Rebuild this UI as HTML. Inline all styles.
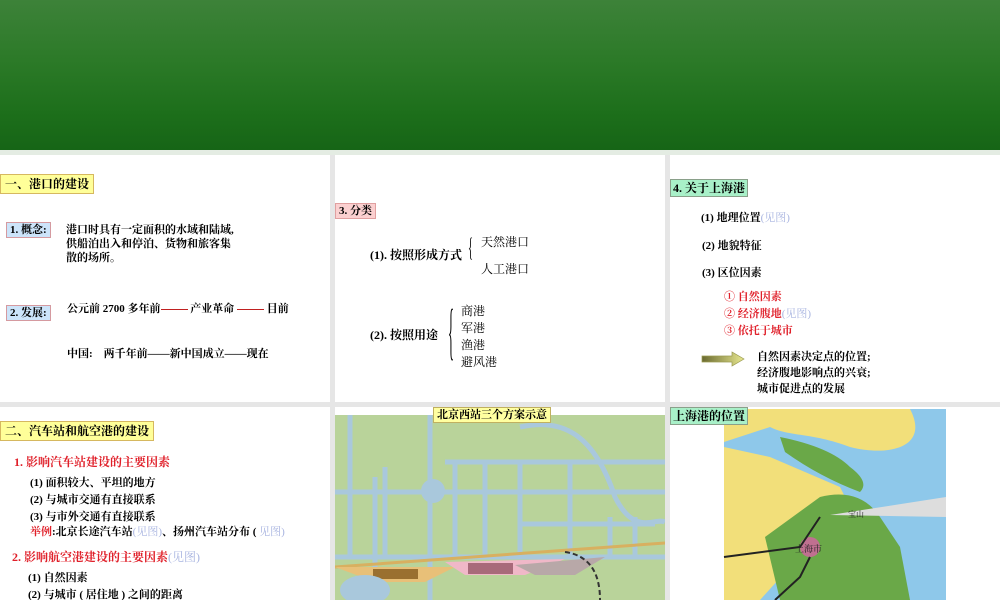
<!DOCTYPE html>
<html><head><meta charset="utf-8"><style>
body{margin:0;width:1000px;height:600px;overflow:hidden;background:#e6e6e6;position:relative;font-family:"Liberation Serif","Noto Serif CJK SC",serif;color:#000}
.hdr{position:absolute;left:0;top:0;width:1000px;height:150px;background:linear-gradient(#3d8239,#2c7a28 40%,#1d6f1b 75%,#166516)}
.strip{position:absolute;left:0;top:150px;width:1000px;height:5px;background:#e4ece3}
.p{position:absolute;background:#fff;overflow:hidden}
.t{position:absolute;white-space:nowrap;font-size:11px;font-weight:bold;line-height:1}
.tag{position:absolute;font-size:12px;font-weight:bold;padding:2px 3px;white-space:nowrap;line-height:14px}
.y{background:#ffff99;border:1px solid #d6b860}
.b{background:#cce4fa;border:1px solid #d59aa0}
.r{color:#e0202a}
.l{color:#a8b4e0;font-weight:normal}
</style></head><body>
<div class="hdr"></div><div class="strip"></div>
<!-- panel 1 -->
<div class="p" style="left:0;top:155px;width:330px;height:247px">
<div class="tag y" style="left:0;top:19px;padding:2px 4px">一、港口的建设</div>
<div class="tag b" style="left:6px;top:67px;font-size:11px;padding:0 3px">1. 概念:</div>
<div class="t" style="left:66px;top:68px;line-height:14px">港口时具有一定面积的水域和陆域,<br>供船泊出入和停泊、货物和旅客集<br>散的场所。</div>
<div class="tag b" style="left:6px;top:150px;font-size:11px;padding:0 3px">2. 发展:</div>
<div class="t" style="left:67px;top:149px">公元前 2700 多年前<span style="display:inline-block;width:27px;border-top:1px solid #c02020;vertical-align:middle"></span> 产业革命 <span style="display:inline-block;width:27px;border-top:1px solid #c02020;vertical-align:middle"></span> 目前</div>
<div class="t" style="left:67px;top:194px">中国:&nbsp;&nbsp;&nbsp; 两千年前——新中国成立——现在</div>
</div>
<!-- panel 2 -->
<div class="p" style="left:335px;top:155px;width:330px;height:247px">
<div class="tag" style="left:0;top:48px;background:#fbd0d0;border:1px solid #e0a0a0;font-size:11px;padding:0 3px">3. 分类</div>
<div class="t" style="left:35px;top:94px;font-size:12px">(1). 按照形成方式</div>
<div class="t" style="left:133px;top:80px;font-size:26px;font-weight:normal;transform:scaleX(.4);transform-origin:left">{</div>
<div class="t" style="left:146px;top:81px;font-size:12px;font-weight:normal">天然港口</div>
<div class="t" style="left:146px;top:108px;font-size:12px;font-weight:normal">人工港口</div>
<div class="t" style="left:35px;top:174px;font-size:12px">(2). 按照用途</div>
<div class="t" style="left:113px;top:146px;font-size:62px;font-weight:normal;transform:scaleX(.2);transform-origin:left">{</div>
<div class="t" style="left:126px;top:148px;font-size:12px;font-weight:normal;line-height:17px">商港<br>军港<br>渔港<br>避风港</div>
</div>
<!-- panel 3 -->
<div class="p" style="left:670px;top:155px;width:330px;height:247px">
<div class="tag" style="left:0;top:24px;background:#a8f0c8;border:1px solid #8aa08a;font-size:12px;padding:1px 2px">4. 关于上海港</div>
<div class="t" style="left:31px;top:58px">(1) 地理位置<span class="l">(见图)</span></div>
<div class="t" style="left:32px;top:86px">(2) 地貌特征</div>
<div class="t" style="left:32px;top:113px">(3) 区位因素</div>
<div class="t r" style="left:54px;top:134px;line-height:17px">① 自然因素<br>② 经济腹地<span class="l">(见图)</span><br>③ 依托于城市</div>
<svg style="position:absolute;left:30px;top:196px" width="50" height="16"><defs><linearGradient id="g"><stop offset="0" stop-color="#6a6a30"/><stop offset="1" stop-color="#e8e890"/></linearGradient></defs><path d="M2 5H32V1L44 8L32 15V11H2Z" fill="url(#g)" stroke="#9a9a50" stroke-width=".7"/></svg>
<div class="t" style="left:87px;top:194px;line-height:16px">自然因素决定点的位置;<br>经济腹地影响点的兴衰;<br>城市促进点的发展</div>
</div>
<!-- panel 4 -->
<div class="p" style="left:0;top:407px;width:330px;height:193px">
<div class="tag y" style="left:0;top:14px;padding:2px 4px">二、汽车站和航空港的建设</div>
<div class="t r" style="left:14px;top:49px;font-size:12px">1. 影响汽车站建设的主要因素</div>
<div class="t" style="left:30px;top:68px;line-height:17px">(1) 面积较大、平坦的地方<br>(2) 与城市交通有直接联系<br>(3) 与市外交通有直接联系</div>
<div class="t" style="left:30px;top:120px"><span class="r">举例</span>:北京长途汽车站<span class="l">(见图)</span>、扬州汽车站分布 ( <span class="l">见图)</span></div>
<div class="t r" style="left:12px;top:144px;font-size:12px">2. 影响航空港建设的主要因素<span class="l">(见图)</span></div>
<div class="t" style="left:28px;top:163px;line-height:17px">(1) 自然因素<br>(2) 与城市 ( 居住地 ) 之间的距离</div>
</div>
<!-- panel 5 map -->
<div class="p" style="left:335px;top:407px;width:330px;height:193px">
<svg width="330" height="193" style="position:absolute;left:0;top:0">
<rect x="0" y="8" width="330" height="185" fill="#b9d39a"/>
<g stroke="#a9c8dc" stroke-width="5" fill="none">
<path d="M0 85H330M0 150H330M95 8V193M15 8V150M50 60V150M120 55V150M150 55V150M185 55V150M235 55V150M275 110V150M300 110V150M110 55H330M185 117H320M40 70V193"/>
<path d="M185 20C230 10 260 30 280 90C300 130 320 110 330 115"/>
</g>
<circle cx="98" cy="84" r="12" fill="#a9c8dc"/>
<path d="M0 160L330 136" stroke="#d8b060" stroke-width="3"/>
<path d="M0 160L40 175H90L120 160Z" fill="#e8c078"/><rect x="38" y="162" width="45" height="10" fill="#9a7030"/>
<path d="M110 155L130 168H190L230 152Z" fill="#f0b8c8"/><rect x="133" y="156" width="45" height="11" fill="#a86a7a"/>
<path d="M180 158L200 168H240L270 150Z" fill="#b8a8a8"/>
<path d="M230 145Q265 150 265 193" stroke="#333" stroke-width="2" stroke-dasharray="5 3" fill="none"/>
<ellipse cx="30" cy="183" rx="25" ry="15" fill="#a9c8dc"/>
</svg>
<div class="tag" style="left:98px;top:0;background:#ffffa0;border:1px solid #c0b060;font-size:11px;padding:0 3px">北京西站三个方案示意</div>
</div>
<!-- panel 6 map -->
<div class="p" style="left:670px;top:407px;width:330px;height:193px">
<svg width="330" height="193" style="position:absolute;left:0;top:0">
<rect x="54" y="2" width="222" height="191" fill="#8ec8ea"/>
<path d="M54 2H240C260 40 220 50 180 40C140 25 120 30 100 20L54 35Z" fill="#f2df7a"/>
<path d="M54 40L100 50L170 80L180 100L150 120L120 160L90 193H54Z" fill="#f2df7a"/>
<path d="M95 130L150 90Q190 80 210 110L230 140L240 193H110Z" fill="#6aa848"/>
<path d="M110 30Q160 40 180 60Q200 75 190 85Q150 70 115 45Z" fill="#6aa848"/>
<circle cx="140" cy="140" r="10" fill="#c07090"/>
<path d="M54 150L130 140L150 110" stroke="#222" stroke-width="2" fill="none"/>
<path d="M140 150L130 170L105 193" stroke="#222" stroke-width="2" fill="none"/>
<path d="M160 108L276 90V110Z" fill="#ddd"/>
<text x="125" y="145" font-size="9" fill="#222">上海市</text>
<text x="178" y="110" font-size="8" fill="#222">宝山</text>
</svg>
<div class="tag" style="left:0;top:0;background:#a8f0c8;border:1px solid #8aa08a;font-size:12px;padding:1px 2px">上海港的位置</div>
</div>
</body></html>
